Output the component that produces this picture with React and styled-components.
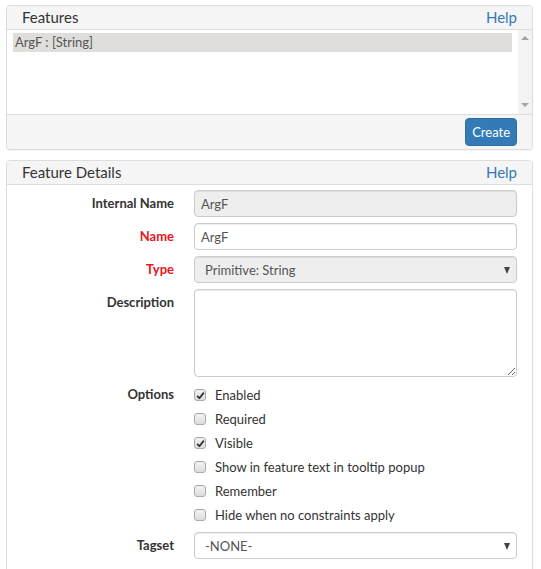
import React from 'react';
import styled, { createGlobalStyle } from 'styled-components';

const GlobalStyle = createGlobalStyle`
  body {
    margin: 0;
    padding: 5px 6px;
    background: #fff;
    font-family: Lato, "Open Sans", sans-serif;
    font-size: 13px;
    color: #333;
  }
  * { box-sizing: border-box; }
`;

const Page = styled.div`
  width: 527px;
  display: flex;
  flex-direction: column;
  gap: 10px;
`;

const Panel = styled.div`
  border: 1px solid #ddd;
  border-radius: 4px;
  background: #fff;
  box-shadow: 0 1px 1px rgba(0, 0, 0, 0.05);
  overflow: hidden;
`;

const PanelHeader = styled.div`
  height: 24px;
  display: flex;
  align-items: center;
  justify-content: space-between;
  padding: 0 15px 2px 15px;
  background: #f5f5f5;
  border-bottom: 1px solid #ddd;
  font-size: 15px;
  color: #333;
`;

const HelpLink = styled.a`
  color: #337ab7;
  text-decoration: none;
  font-size: 15px;
`;

const ListArea = styled.div`
  height: 84px;
  display: flex;
  background: #fff;
`;

const List = styled.div`
  flex: 1;
  padding: 3px 6px 0 6px;
`;

const ListItem = styled.div`
  height: 19px;
  line-height: 18px;
  padding: 0 2px;
  background: ${(p) => (p.$selected ? '#e0dedc' : 'transparent')};
  color: #555;
`;

const ScrollBar = styled.div`
  width: 14px;
  display: flex;
  flex-direction: column;
  justify-content: space-between;
  align-items: center;
  padding: 6px 0 7px;
  background: #f3f3f3;
`;

const Arrow = styled.span`
  width: 0;
  height: 0;
  border-left: 4px solid transparent;
  border-right: 4px solid transparent;
  ${(p) =>
    p.$up
      ? 'border-bottom: 4px solid #a3a3a3;'
      : 'border-top: 4px solid #a3a3a3;'}
`;

const PanelFooter = styled.div`
  height: 35px;
  display: flex;
  align-items: center;
  justify-content: flex-end;
  padding: 0 15px;
  background: #f5f5f5;
  border-top: 1px solid #ddd;
`;

const Button = styled.button`
  height: 28px;
  padding: 0 6px;
  font-family: inherit;
  font-size: 13px;
  color: #fff;
  background: #337ab7;
  border: 1px solid #2e6da4;
  border-radius: 4px;
  margin-top: -1px;
`;

const Form = styled.div`
  display: grid;
  grid-template-columns: 167px 1fr;
  column-gap: 20px;
  row-gap: 6px;
  padding: 5px 15px 20px 0;
`;

const Label = styled.div`
  text-align: right;
  font-weight: 700;
  padding-top: ${(p) => p.$top || 5}px;
  line-height: 16px;
  color: ${(p) => (p.$required ? '#e8161c' : '#333')};
`;

const Input = styled.input`
  width: 100%;
  height: 27px;
  padding: 0 6px;
  font-family: inherit;
  font-size: 13px;
  color: #555;
  background: ${(p) => (p.disabled ? '#eee' : '#fff')};
  border: 1px solid #ccc;
  border-radius: 4px;
  box-shadow: inset 0 1px 1px rgba(0, 0, 0, 0.075);
  outline: none;
`;

const SelectBox = styled.div`
  height: 27px;
  display: flex;
  align-items: center;
  justify-content: space-between;
  padding: 0 6px 0 10px;
  color: #555;
  background: ${(p) => (p.$grey ? '#eee' : '#fff')};
  border: 1px solid #ccc;
  border-radius: 4px;
  box-shadow: inset 0 1px 1px rgba(0, 0, 0, 0.075);
`;

const Caret = styled.span`
  width: 0;
  height: 0;
  border-left: 3.5px solid transparent;
  border-right: 3.5px solid transparent;
  border-top: 7px solid #444;
  margin-top: 1px;
`;

const TextArea = styled.textarea`
  width: 100%;
  height: 88px;
  display: block;
  font-family: inherit;
  font-size: 13px;
  border: 1px solid #ccc;
  border-radius: 4px;
  box-shadow: inset 0 1px 1px rgba(0, 0, 0, 0.075);
  resize: both;
  outline: none;
`;

const Options = styled.div`
  display: flex;
  flex-direction: column;
  margin-bottom: -1px;
`;

const Check = styled.label`
  height: 24px;
  display: flex;
  align-items: center;
  gap: 8px;
  color: #333;
`;

const Box = styled.span`
  width: 12px;
  height: 12px;
  display: flex;
  align-items: center;
  justify-content: center;
  border: 1px solid #a9a9a9;
  border-radius: 3px;
  background: linear-gradient(#f2f2f2, #dcdcdc);
  margin-right: 1px;
`;

function CheckItem({ checked, children }) {
  return (
    <Check>
      <Box>
        {checked && (
          <svg width="9" height="9" viewBox="0 0 9 9">
            <path d="M1.2 4.8 L3.4 7.2 L7.8 1.6" fill="none" stroke="#333" strokeWidth="1.8" strokeLinejoin="round" />
          </svg>
        )}
      </Box>
      {children}
    </Check>
  );
}

export default function App() {
  return (
    <>
      <GlobalStyle />
      <Page>
        <Panel>
          <PanelHeader>
            <span>Features</span>
            <HelpLink href="#">Help</HelpLink>
          </PanelHeader>
          <ListArea>
            <List>
              <ListItem $selected>ArgF : [String]</ListItem>
            </List>
            <ScrollBar>
              <Arrow $up />
              <Arrow />
            </ScrollBar>
          </ListArea>
          <PanelFooter>
            <Button>Create</Button>
          </PanelFooter>
        </Panel>

        <Panel>
          <PanelHeader>
            <span>Feature Details</span>
            <HelpLink href="#">Help</HelpLink>
          </PanelHeader>
          <Form>
            <Label>Internal Name</Label>
            <Input disabled value="ArgF" readOnly />

            <Label $required>Name</Label>
            <Input value="ArgF" readOnly />

            <Label $required>Type</Label>
            <SelectBox $grey>
              <span>Primitive: String</span>
              <Caret />
            </SelectBox>

            <Label>Description</Label>
            <TextArea />

            <Label $top={3}>Options</Label>
            <Options>
              <CheckItem checked>Enabled</CheckItem>
              <CheckItem>Required</CheckItem>
              <CheckItem checked>Visible</CheckItem>
              <CheckItem>Show in feature text in tooltip popup</CheckItem>
              <CheckItem>Remember</CheckItem>
              <CheckItem>Hide when no constraints apply</CheckItem>
            </Options>

            <Label>Tagset</Label>
            <SelectBox>
              <span>-NONE-</span>
              <Caret />
            </SelectBox>
          </Form>
        </Panel>
      </Page>
    </>
  );
}
